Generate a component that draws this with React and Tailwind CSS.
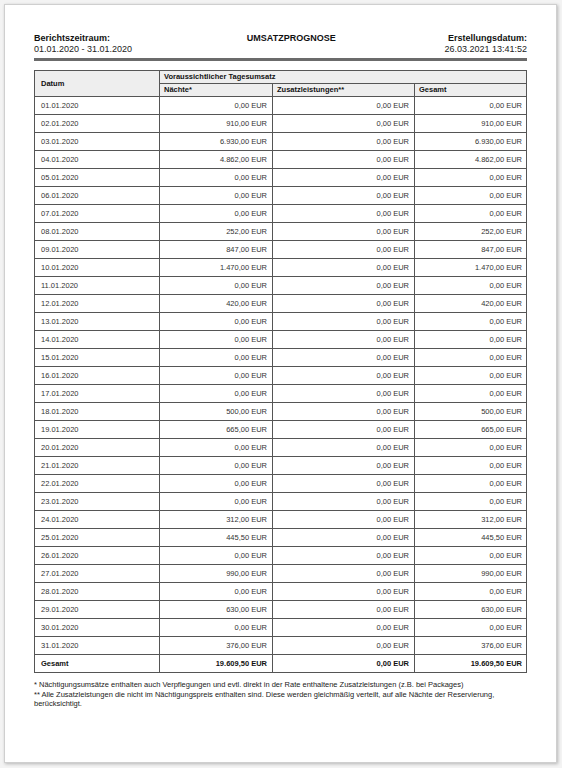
import React from "react";

const nights = [
  "0,00", "910,00", "6.930,00", "4.862,00", "0,00", "0,00", "0,00", "252,00",
  "847,00", "1.470,00", "0,00", "420,00", "0,00", "0,00", "0,00", "0,00",
  "0,00", "500,00", "665,00", "0,00", "0,00", "0,00", "0,00", "312,00",
  "445,50", "0,00", "990,00", "0,00", "630,00", "0,00", "376,00",
];

const rows = nights.map((n, i) => ({
  date: `${String(i + 1).padStart(2, "0")}.01.2020`,
  nights: n,
}));

const App = () => {
  return (
    <div
      className="min-h-screen bg-[#f3f3f3] p-[4px]"
      style={{ fontFamily: '"Liberation Sans", Arial, sans-serif' }}
    >
      <div className="h-[759px] w-[553px] bg-white border border-[#cfcfcf] shadow-[1px_1px_3px_rgba(0,0,0,0.25)] pl-[29px] pr-[29px] pt-[28px]">
        {/* Kopfbereich */}
        <div className="flex justify-between text-[9px] leading-[11px] text-[#222]">
          <div>
            <div className="font-bold text-[#111]">Berichtszeitraum:</div>
            <div>01.01.2020 - 31.01.2020</div>
          </div>
          <div className="font-bold text-[#111] pl-[6px]">UMSATZPROGNOSE</div>
          <div className="text-right">
            <div className="font-bold text-[#111]">Erstellungsdatum:</div>
            <div>26.03.2021 13:41:52</div>
          </div>
        </div>
        <div className="mt-[3px] h-[3px] bg-[#6b6b6b]" />

        <table className="mt-[9px] w-full border-collapse text-[7.5px] text-[#333] table-fixed">
          <colgroup>
            <col className="w-[125px]" />
            <col className="w-[113px]" />
            <col className="w-[142px]" />
            <col />
          </colgroup>
          <thead>
            <tr className="h-[13px] bg-[#eeeeee]">
              <th
                rowSpan={2}
                className="border border-[#555] px-[6px] text-left font-bold text-[#111]"
              >
                Datum
              </th>
              <th
                colSpan={3}
                className="border border-[#555] px-[4px] text-left font-bold text-[#111]"
              >
                Voraussichtlicher Tagesumsatz
              </th>
            </tr>
            <tr className="h-[13px] bg-[#eeeeee]">
              <th className="border border-[#555] px-[4px] text-left font-bold text-[#111]">
                Nächte*
              </th>
              <th className="border border-[#555] px-[4px] text-left font-bold text-[#111]">
                Zusatzleistungen**
              </th>
              <th className="border border-[#555] px-[4px] text-left font-bold text-[#111]">
                Gesamt
              </th>
            </tr>
          </thead>
          <tbody>
            {rows.map((r) => (
              <tr key={r.date} className="h-[18px]">
                <td className="border border-[#555] px-[6px]">{r.date}</td>
                <td className="border border-[#555] px-[5px] text-right">
                  {r.nights} EUR
                </td>
                <td className="border border-[#555] px-[5px] text-right">
                  0,00 EUR
                </td>
                <td className="border border-[#555] px-[4px] text-right">
                  {r.nights} EUR
                </td>
              </tr>
            ))}
            <tr className="h-[18px] font-bold text-[#111]">
              <td className="border border-[#555] px-[6px]">Gesamt</td>
              <td className="border border-[#555] px-[5px] text-right">
                19.609,50 EUR
              </td>
              <td className="border border-[#555] px-[5px] text-right">
                0,00 EUR
              </td>
              <td className="border border-[#555] px-[4px] text-right">
                19.609,50 EUR
              </td>
            </tr>
          </tbody>
        </table>

        <div className="mt-[7px] text-[7.5px] leading-[9.5px] text-[#222]">
          <p>
            * Nächtigungsumsätze enthalten auch Verpflegungen und evtl. direkt
            in der Rate enthaltene Zusatzleistungen (z.B. bei Packages)
          </p>
          <p>
            ** Alle Zusatzleistungen die nicht im Nächtigungspreis enthalten
            sind. Diese werden gleichmäßig verteilt, auf alle Nächte der
            Reservierung, berücksichtigt.
          </p>
        </div>
      </div>
    </div>
  );
};

export default App;
